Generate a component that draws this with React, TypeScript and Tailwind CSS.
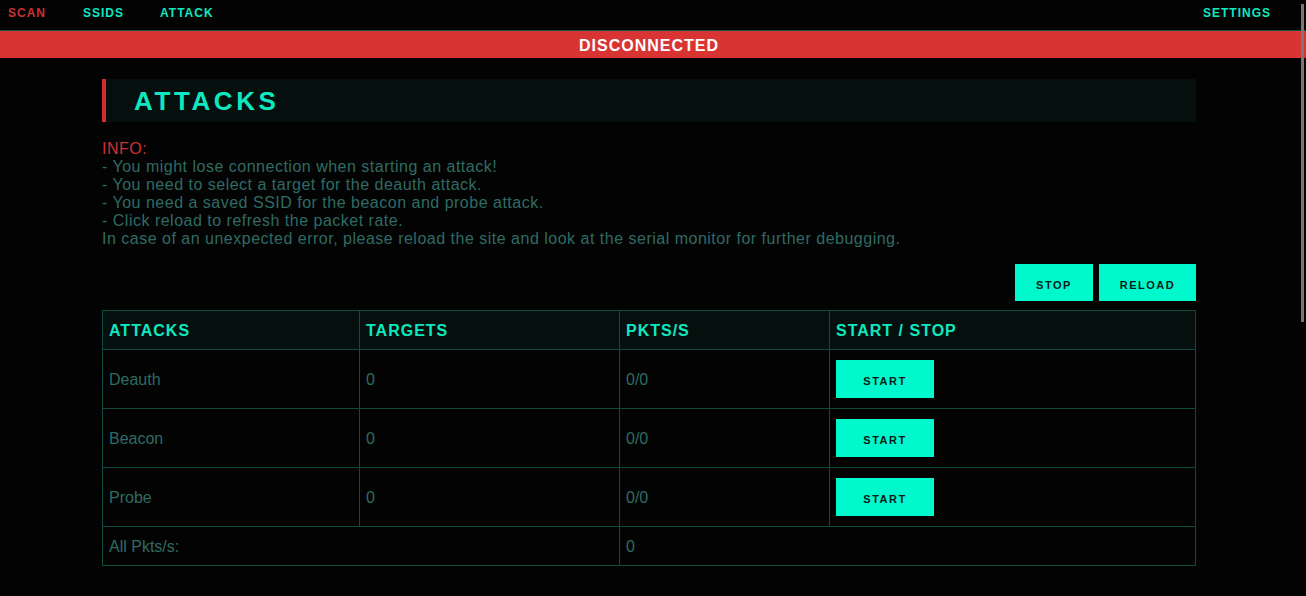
import React from 'react';

const rows = [
  { name: 'Deauth', targets: '0', pkts: '0/0' },
  { name: 'Beacon', targets: '0', pkts: '0/0' },
  { name: 'Probe', targets: '0', pkts: '0/0' },
];

const cell = 'border border-[#0d4a40] px-[6px] align-middle';
const btn = 'bg-[#00f9cc] pt-[5px] text-[11px] font-bold tracking-[1.5px] text-[#061a16]';

export default function App() {
  return (
    <div className="relative min-h-[596px] bg-[#030303] font-['Liberation_Sans',Arial,sans-serif] text-[#2f6b64]">
      <nav className="flex h-[31px] items-start border-b border-[#0f5a4c] pt-[4px] text-[12px] font-bold tracking-[1px]">
        <a className="ml-[8px] text-[#c83232]">SCAN</a>
        <a className="ml-[37px] text-[#0de8c0]">SSIDS</a>
        <a className="ml-[36px] text-[#0de8c0]">ATTACK</a>
        <a className="ml-auto mr-[35px] text-[#0de8c0]">SETTINGS</a>
      </nav>
      <div className="flex h-[27px] items-center justify-center bg-[#d93434] pr-[8px] pt-[2px] text-[16px] font-bold tracking-[1px] text-white">
        DISCONNECTED
      </div>

      <main className="mx-[102px] w-[1094px] pt-[21px]">
        <div className="flex h-[43px] items-center border-l-4 border-[#d12f2f] bg-[#050f0d] pl-[28px] pt-[2px]">
          <h1 className="text-[26px] font-bold tracking-[3.6px] text-[#0de8c0]">ATTACKS</h1>
        </div>

        <div className="mt-[18px] text-[16px] leading-[18px] tracking-[0.5px]">
          <p className="text-[#cc3333]">INFO:</p>
          <p>- You might lose connection when starting an attack!</p>
          <p>- You need to select a target for the deauth attack.</p>
          <p>- You need a saved SSID for the beacon and probe attack.</p>
          <p>- Click reload to refresh the packet rate.</p>
          <p>In case of an unexpected error, please reload the site and look at the serial monitor for further debugging.</p>
        </div>

        <div className="mt-[16px] flex justify-end gap-[6px]">
          <button className={`${btn} h-[37px] w-[78px]`}>STOP</button>
          <button className={`${btn} h-[37px] w-[97px]`}>RELOAD</button>
        </div>

        <table className="mt-[9px] w-full border-collapse text-[16px]">
          <thead>
            <tr className="h-[39px] bg-[#050f0d] text-left text-[16px] font-bold tracking-[1px] text-[#0de8c0]">
              <th className={`${cell} w-[257px] pt-[2px]`}>ATTACKS</th>
              <th className={`${cell} w-[260px] pt-[2px]`}>TARGETS</th>
              <th className={`${cell} w-[210px] pt-[2px]`}>PKTS/S</th>
              <th className={`${cell} pt-[2px]`}>START / STOP</th>
            </tr>
          </thead>
          <tbody>
            {rows.map((r) => (
              <tr key={r.name} className="h-[59px]">
                <td className={`${cell} pt-[2px]`}>{r.name}</td>
                <td className={`${cell} pt-[2px]`}>{r.targets}</td>
                <td className={`${cell} pt-[2px]`}>{r.pkts}</td>
                <td className={cell}>
                  <button className={`${btn} h-[38px] w-[98px]`}>START</button>
                </td>
              </tr>
            ))}
            <tr className="h-[39px]">
              <td className={`${cell} pt-[2px]`} colSpan={2}>All Pkts/s:</td>
              <td className={`${cell} pt-[2px]`} colSpan={2}>0</td>
            </tr>
          </tbody>
        </table>
      </main>

      <div className="absolute right-[2px] top-[4px] h-[318px] w-[3px] bg-[#777]" />
    </div>
  );
}
